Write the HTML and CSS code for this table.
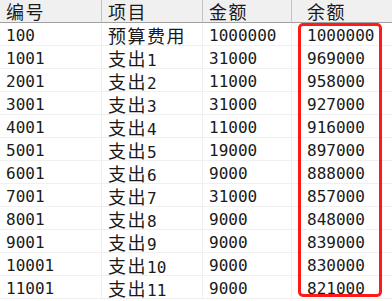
FILE: index.html
```html
<!DOCTYPE html>
<html>
<head>
<meta charset="utf-8">
<link rel="stylesheet" href="styles.css">
</head>
<body>
<div class="grid">
  <div class="cell head"><span class="cjk">编号</span></div>
  <div class="cell head"><span class="cjk">项目</span></div>
  <div class="cell head"><span class="cjk">金额</span></div>
  <div class="cell head last"><span class="cjk">余额</span></div>

  <div class="cell">100</div><div class="cell"><span class="cjk">预算费用</span></div><div class="cell">1000000</div><div class="cell last">1000000</div>
  <div class="cell">1001</div><div class="cell"><span class="cjk">支出</span>1</div><div class="cell">31000</div><div class="cell last">969000</div>
  <div class="cell">2001</div><div class="cell"><span class="cjk">支出</span>2</div><div class="cell">11000</div><div class="cell last">958000</div>
  <div class="cell">3001</div><div class="cell"><span class="cjk">支出</span>3</div><div class="cell">31000</div><div class="cell last">927000</div>
  <div class="cell">4001</div><div class="cell"><span class="cjk">支出</span>4</div><div class="cell">11000</div><div class="cell last">916000</div>
  <div class="cell">5001</div><div class="cell"><span class="cjk">支出</span>5</div><div class="cell">19000</div><div class="cell last">897000</div>
  <div class="cell">6001</div><div class="cell"><span class="cjk">支出</span>6</div><div class="cell">9000</div><div class="cell last">888000</div>
  <div class="cell">7001</div><div class="cell"><span class="cjk">支出</span>7</div><div class="cell">31000</div><div class="cell last">857000</div>
  <div class="cell">8001</div><div class="cell"><span class="cjk">支出</span>8</div><div class="cell">9000</div><div class="cell last">848000</div>
  <div class="cell">9001</div><div class="cell"><span class="cjk">支出</span>9</div><div class="cell">9000</div><div class="cell last">839000</div>
  <div class="cell">10001</div><div class="cell"><span class="cjk">支出</span>10</div><div class="cell">9000</div><div class="cell last">830000</div>
  <div class="cell">11001</div><div class="cell"><span class="cjk">支出</span>11</div><div class="cell">9000</div><div class="cell last">821000</div>

  <div class="highlight"></div>
</div>
</body>
</html>
```
FILE: styles.css
```css
html, body {
  margin: 0;
  padding: 0;
  background: #ffffff;
}
.grid {
  position: relative;
  display: grid;
  grid-template-columns: 102px 101px 89px 1fr;
  grid-auto-rows: 23px;
  width: 392px;
  font-family: "DejaVu Sans Mono", "Noto Sans CJK SC", monospace;
  font-size: 16px;
  color: #1a1a1a;
}
.cell {
  box-sizing: border-box;
  border-right: 1px solid #f0f0f0;
  border-bottom: 1px solid #f0f0f0;
  padding: 3px 0 0 6px;
  line-height: 20px;
  white-space: nowrap;
}
.cell.last {
  padding-left: 15px;
  border-right: none;
}
.cell.head {
  background: #f0f0f0;
  border-right: 1px solid #c4c4c4;
  border-bottom: 1px solid #a0a0a0;
  padding-top: 2px;
}
.cell.head.last {
  border-right: none;
}
.cjk {
  font-family: "Noto Sans CJK SC", sans-serif;
  font-size: 18px;
  letter-spacing: 1.5px;
  line-height: 18px;
}
.highlight {
  position: absolute;
  left: 298px;
  top: 23px;
  width: 84px;
  height: 274px;
  box-sizing: border-box;
  border: 3px solid #ff1a1a;
  border-radius: 5px;
}
```
